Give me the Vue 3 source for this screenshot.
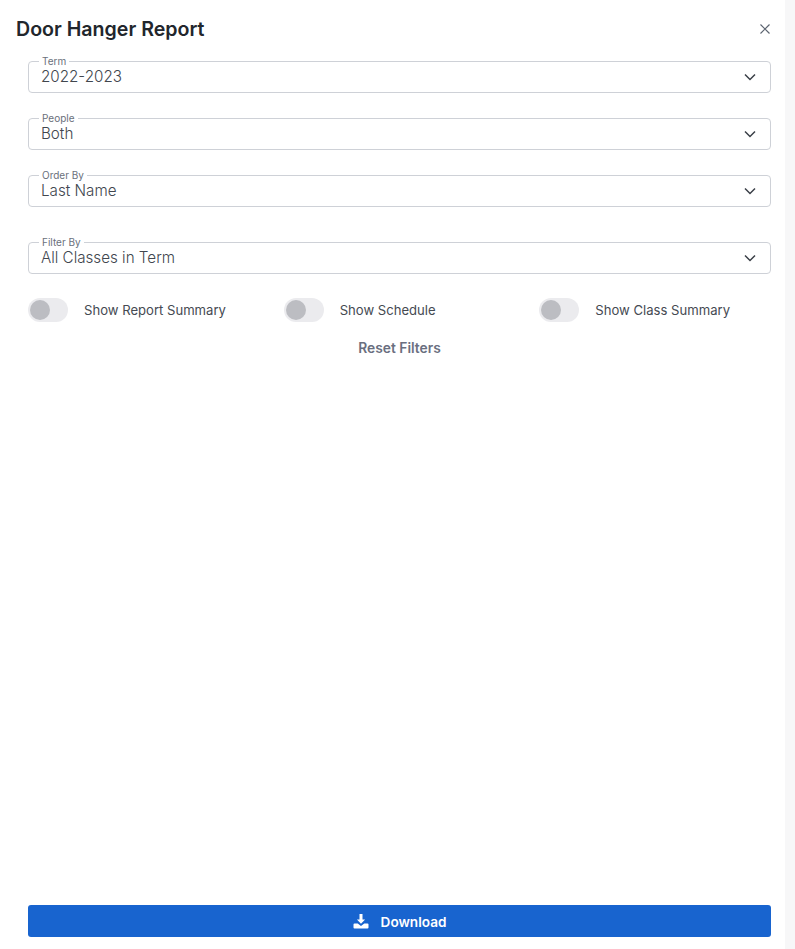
<script setup>
import { ref } from 'vue'

// report filter dropdowns
const selects = ref([
  { label: 'Term', value: '2022-2023' },
  { label: 'People', value: 'Both' },
  { label: 'Order By', value: 'Last Name' },
  { label: 'Filter By', value: 'All Classes in Term' }
])

// summary switches, all off by default
const toggles = ref([
  { label: 'Show Report Summary', on: false },
  { label: 'Show Schedule', on: false },
  { label: 'Show Class Summary', on: false }
])
</script>

<template>
  <div class="page">
    <div class="modal">
      <header class="head">
        <h1>Door Hanger Report</h1>
        <button class="close" aria-label="Close">
          <svg width="10" height="10" viewBox="0 0 10 10">
            <path d="M.5.5l9 9M9.5.5l-9 9" stroke="#5c6470" stroke-width="1.2" fill="none" />
          </svg>
        </button>
      </header>

      <div class="filters">
        <div v-for="s in selects" :key="s.label" class="select">
          <span class="label">{{ s.label }}</span>
          <span class="value">{{ s.value }}</span>
          <svg class="chev" width="12" height="8" viewBox="0 0 12 8">
            <path d="M1 1.500l5 5 5-5" stroke="#3a3f47" stroke-width="1.5" fill="none" />
          </svg>
        </div>
      </div>

      <div class="toggles">
        <label v-for="t in toggles" :key="t.label" class="toggle">
          <span class="track"><span class="knob"></span></span>
          <span class="toggle-text">{{ t.label }}</span>
        </label>
      </div>

      <button class="reset">Reset Filters</button>

      <button class="download">
        <svg width="16" height="15" viewBox="0 0 16 15">
          <path d="M6.500 0h3v5.500h2.600L8 9.800 3.900 5.500h2.600z" fill="#fff" />
          <path d="M.5 10.500a1 1 0 0 1 1-1h3.200L8 12l3.300-2.500h3.200a1 1 0 0 1 1 1v3a1 1 0 0 1-1 1h-13a1 1 0 0 1-1-1z" fill="#fff" />
        </svg>
        <span class="download-text">Download</span>
      </button>
    </div>
  </div>
</template>

<style>
html, body {
  margin: 0;
  background: #f7f7f8;
}
</style>

<style scoped>
.page {
  width: 795px;
  height: 949px;
  overflow: hidden;
  font-family: Inter, "Noto Sans", sans-serif;
}

.modal {
  box-sizing: border-box;
  width: 785px;
  height: 949px;
  background: #fff;
  display: flex;
  flex-direction: column;
  padding: 0 14px 12px 28px;
}

.head {
  display: flex;
  justify-content: space-between;
  align-items: center;
  height: 61px;
  margin-left: -12px;
  padding-bottom: 3px;
  box-sizing: border-box;
}

.head h1 {
  margin: 0;
  font-size: 19.6px;
  font-weight: 600;
  color: #22262c;
}

.close {
  border: 0;
  background: none;
  padding: 0;
  display: flex;
  margin-right: 1px;
}

.filters {
  display: flex;
  flex-direction: column;
  gap: 25px;
}

.select {
  position: relative;
  box-sizing: border-box;
  height: 32px;
  border: 1px solid #ced1d7;
  border-radius: 4px;
  display: flex;
  align-items: center;
  padding: 0 14px 0 12px;
  justify-content: space-between;
}

.select:last-child {
  margin-top: 10px;
}

.label {
  position: absolute;
  top: -7px;
  left: 10px;
  padding: 0 3px;
  background: #fff;
  font-size: 10px;
  line-height: 13px;
  color: #6a707b;
}

.value {
  font-size: 15.2px;
  font-weight: 300;
  color: #41464e;
  padding-bottom: 1px;
}

.toggles {
  display: grid;
  grid-template-columns: repeat(3, 255.67px);
  margin-top: 24px;
}

.toggle {
  display: flex;
  align-items: center;
  gap: 16px;
}

.track {
  width: 40px;
  height: 24px;
  border-radius: 12px;
  background: #ebebee;
  display: flex;
  align-items: center;
  padding-left: 2px;
  box-sizing: border-box;
}

.knob {
  width: 20px;
  height: 20px;
  border-radius: 50%;
  background: #bcbdc2;
}

.toggle-text {
  font-size: 13.1px;
  color: #454a52;
}

.reset {
  align-self: center;
  margin-top: 18px;
  border: 0;
  background: none;
  padding: 0;
  font-family: inherit;
  font-size: 13.8px;
  font-weight: 600;
  color: #6a6f80;
  line-height: 16px;
}

.download {
  margin-top: auto;
  height: 32px;
  border: 0;
  border-radius: 3px;
  background: #1864cf;
  color: #fff;
  font-family: inherit;
  font-size: 13.6px;
  font-weight: 600;
  display: flex;
  align-items: center;
  justify-content: center;
  gap: 12px;
}

.download-text {
  padding-top: 2px;
}
</style>
